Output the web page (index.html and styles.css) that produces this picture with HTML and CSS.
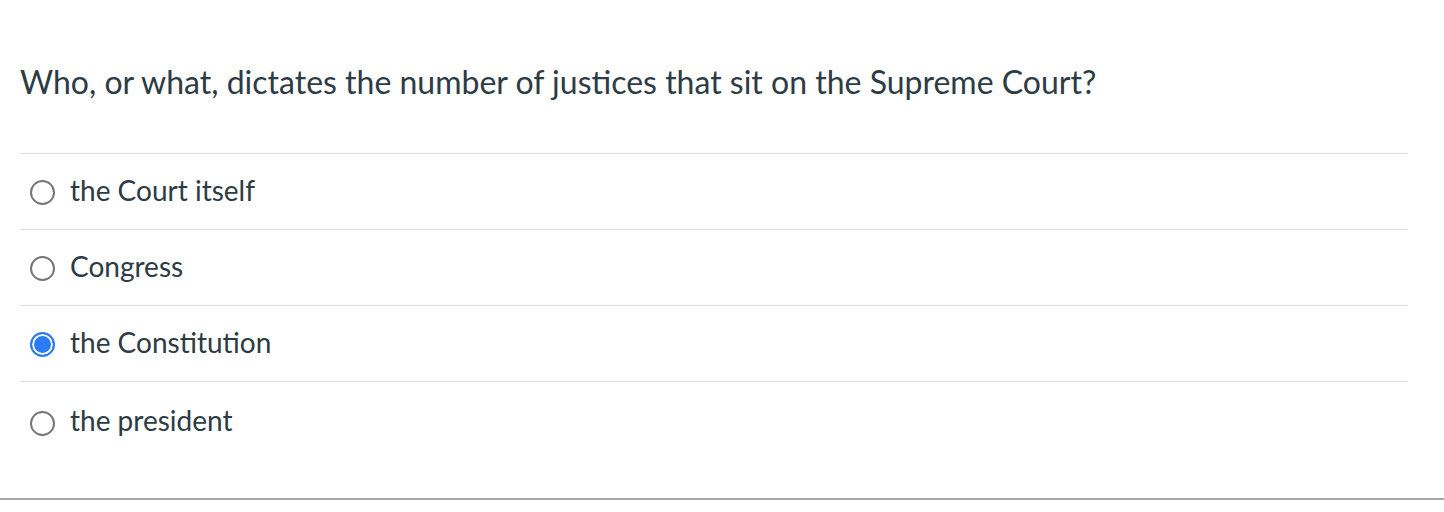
FILE: index.html
```html
<!DOCTYPE html>
<html>
<head>
<meta charset="utf-8">
<link rel="stylesheet" href="styles.css">
</head>
<body>
<div class="quiz">
  <div class="question">Who, or what, dictates the number of justices that sit on the Supreme Court?</div>
  <div class="answers">
    <label class="answer"><span class="radio"></span><span class="label">the Court itself</span></label>
    <label class="answer"><span class="radio"></span><span class="label">Congress</span></label>
    <label class="answer"><span class="radio checked"></span><span class="label">the Constitution</span></label>
    <label class="answer"><span class="radio"></span><span class="label">the president</span></label>
  </div>
</div>
<div class="footer-rule"></div>
</body>
</html>
```
FILE: styles.css
```css
html, body {
  margin: 0;
  padding: 0;
  background: #fff;
}
body {
  font-family: Lato, "Liberation Sans", sans-serif;
  color: #2d3b45;
  width: 1444px;
}
.quiz {
  padding: 0 36px 0 20px;
}
.question {
  font-size: 32px;
  line-height: 40px;
  padding-top: 62px;
  box-sizing: border-box;
  height: 153px;
}
.answers {
  border-top: 1px solid #dcdcdc;
}
.answer {
  display: flex;
  align-items: center;
  height: 75px;
  border-bottom: 1px solid #dcdcdc;
  padding-left: 10px;
  gap: 15px;
}
.answer:last-child {
  border-bottom: none;
  height: 80px;
}
.radio {
  width: 21px;
  height: 21px;
  border: 2px solid #767676;
  border-radius: 50%;
  box-sizing: content-box;
  flex: none;
  position: relative;
  top: 1px;
}
.radio.checked {
  border-color: #2b7bf3;
  background: #2b7bf3;
  box-shadow: inset 0 0 0 2px #fff;
}
.label {
  font-size: 28px;
  line-height: 34px;
  position: relative;
  top: -2px;
}
.footer-rule {
  margin-top: 36px;
  height: 2px;
  background: #a6a6a6;
}
```
